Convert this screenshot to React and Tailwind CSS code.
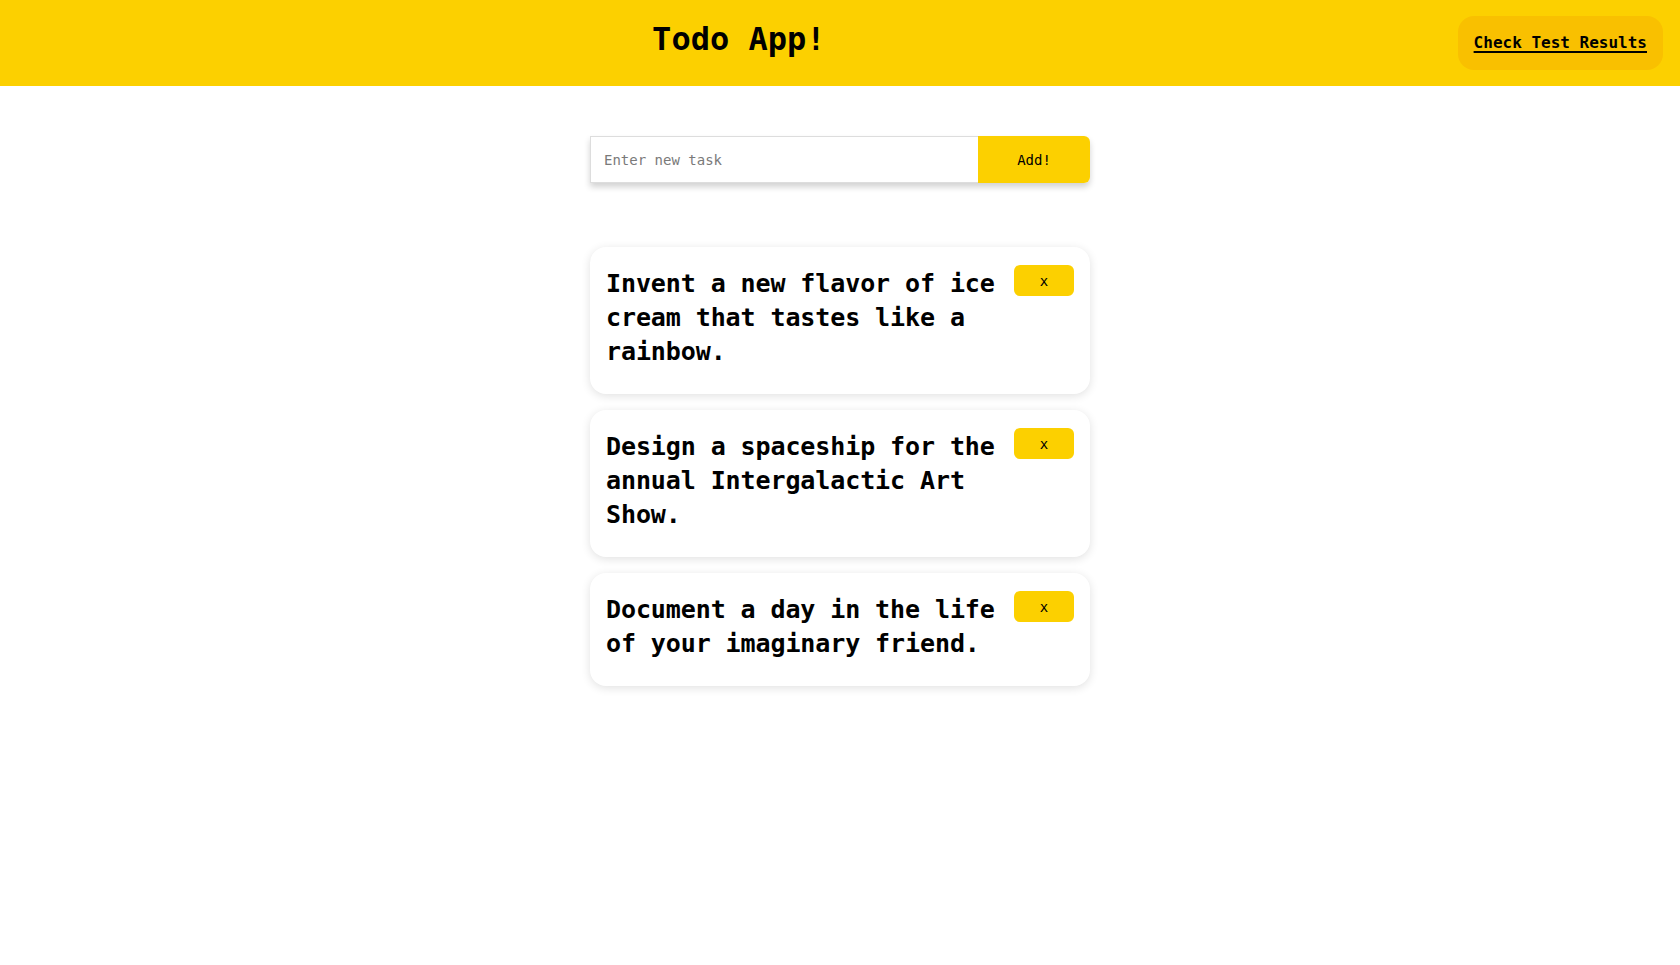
import { useState } from 'react';

const mono = { fontFamily: '"DejaVu Sans Mono", "Liberation Mono", monospace' };

const initialTodos = [
  { id: 1, text: 'Invent a new flavor of ice cream that tastes like a rainbow.' },
  { id: 2, text: 'Design a spaceship for the annual Intergalactic Art Show.' },
  { id: 3, text: 'Document a day in the life of your imaginary friend.' },
];

export default function App() {
  const [todos, setTodos] = useState(initialTodos);
  const [task, setTask] = useState('');

  const add = () => {
    if (!task.trim()) return;
    setTodos((p) => [...p, { id: Date.now(), text: task.trim() }]);
    setTask('');
  };

  const remove = (id) => setTodos((p) => p.filter((t) => t.id !== id));

  return (
    <div className="min-h-screen bg-white text-black" style={mono}>
      {/* Header */}
      <header className="h-[86px] bg-[#fcd000] flex items-center pl-5 pr-[17px]">
        <div className="flex-1 text-center pb-2">
          <h1 className="text-[32px] font-bold leading-none">Todo App!</h1>
        </div>
        <a
          href="#"
          className="bg-[#f9c000] rounded-2xl px-4 py-[15px] text-base leading-6 font-bold underline underline-offset-[3px] decoration-2"
        >
          Check Test Results
        </a>
      </header>

      <main className="w-[500px] mx-auto pt-[50px]">
        {/* Input row */}
        <div className="flex h-[47px] shadow-[0_4px_6px_rgba(0,0,0,0.18)] rounded-r-md">
          <input
            value={task}
            onChange={(e) => setTask(e.target.value)}
            placeholder="Enter new task"
            className="flex-1 min-w-0 border border-[#dddddd] border-r-0 px-[13px] text-sm outline-none placeholder:text-[#7a7a7a]"
            style={mono}
          />
          <button
            onClick={add}
            className="w-[112px] bg-[#fcd000] rounded-r-md text-sm"
            style={mono}
          >
            Add!
          </button>
        </div>

        {/* Todos */}
        <div className="mt-16 flex flex-col gap-4">
          {todos.map((t) => (
            <div
              key={t.id}
              className="flex gap-4 items-start bg-white rounded-2xl px-4 pt-[20px] pb-[25px] shadow-[0_2px_10px_rgba(0,0,0,0.12)]"
            >
              <p className="flex-1 text-[25px] leading-[34px] font-bold tracking-[-0.1px]">{t.text}</p>
              <button
                onClick={() => remove(t.id)}
                className="w-[60px] h-[31px] shrink-0 -mt-[2px] bg-[#fcd000] rounded-md text-sm leading-none"
                style={mono}
              >
                x
              </button>
            </div>
          ))}
        </div>
      </main>
    </div>
  );
}
